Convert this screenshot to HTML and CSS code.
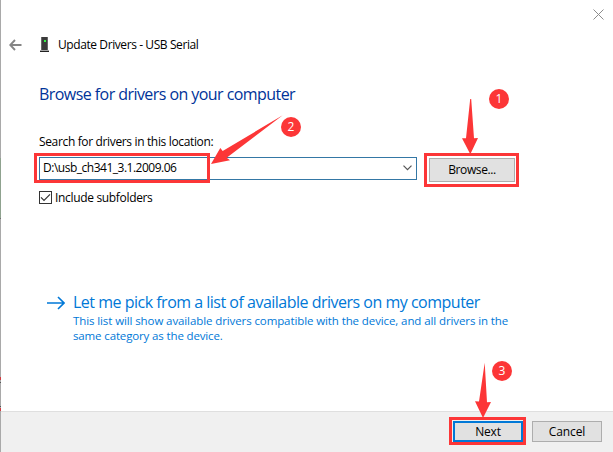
FILE: index.html
```
<!DOCTYPE html>
<html lang="en">
<head>
<meta charset="utf-8">
<title>Update Drivers - USB Serial</title>
<link rel="stylesheet" href="styles.css">
</head>
<body>
<div class="window">
  <div class="edge"></div>
  <header class="titlebar">
    <svg class="close" width="11" height="11" viewBox="0 0 11 11"><path d="M.5 .5l10 10M10.5 .5l-10 10"/></svg>
  </header>
  <div class="caption">
    <svg class="back" width="13" height="12" viewBox="0 0 13 12"><path d="M12.5 6H1.5M6 1L1.2 6L6 11"/></svg>
    <svg class="device" width="9" height="15" viewBox="0 0 9 15">
      <path d="M1 0h7v13H1z" fill="#3b3b3b"/><path d="M1 0h1v13H1zM7 0h1v13H7z" fill="#686868"/>
      <path d="M0 13.6h9V15H0z" fill="#222"/><path d="M4 3h2v2H4z" fill="#35f545"/>
    </svg>
    <span>Update Drivers - USB Serial</span>
  </div>
  <main class="content">
    <h1>Browse for drivers on your computer</h1>
    <label class="label" for="path">Search for drivers in this location:</label>
    <div class="location">
      <div class="combo" id="path">
        <span>D:\usb_ch341_3.1.2009.06</span>
        <svg width="9" height="6" viewBox="0 0 9 6"><path d="M.5 .7L4.5 4.7L8.5 .7"/></svg>
      </div>
      <button class="button browse">Browse...</button>
    </div>
    <div class="option">
      <span class="check"><svg width="11" height="11" viewBox="0 0 11 11"><path d="M1 5.3L4 8.3L10 2.3"/></svg></span>
      <span>Include subfolders</span>
    </div>
    <div class="link">
      <svg width="18" height="14" viewBox="0 0 18 14"><path d="M0 7h17M11 1l6 6l-6 6"/></svg>
      <div>
        <div class="link-title">Let me pick from a list of available drivers on my computer</div>
        <div class="link-text">This list will show available drivers compatible with the device, and all drivers in the<br><span class="last">same category as the device.</span></div>
      </div>
    </div>
  </main>
  <footer class="footer">
    <button class="button next">Next</button>
    <button class="button cancel">Cancel</button>
  </footer>
  <svg class="notes" width="613" height="452" viewBox="0 0 613 452">
    <g class="frames">
      <rect x="35.5" y="154.5" width="173" height="27"/>
      <rect x="425.5" y="154.5" width="92" height="31"/>
      <rect x="450.5" y="418.5" width="74" height="25"/>
    </g>
    <g class="marks">
      <path d="M470.2 99h1L474 138.2L478 138L470.3 154.3L462 138.3L466 138.2z"/>
      <path d="M282.7 115.2L226.7 157.7L230 160.3L211 164L220.3 148L222.7 151z"/>
      <path d="M484.7 362.7L487 402.2L491 402L483 418L475 401.3L479 401.5z"/>
      <circle cx="499" cy="99" r="10"/>
      <circle cx="291" cy="127" r="10"/>
      <circle cx="502" cy="371" r="10"/>
    </g>
    <g class="digits">
      <text x="499" y="103.2">1</text>
      <text x="291" y="131.2">2</text>
      <text x="502" y="375.2">3</text>
    </g>
  </svg>
</div>
</body>
</html>
```
FILE: styles.css
```
* { box-sizing: border-box; }
body {
  margin: 0;
  font: 12px/15px "Open Sans", "Noto Sans", sans-serif;
  color: #000;
}
svg { display: block; fill: none; flex: none; }
.window {
  position: relative;
  width: 613px;
  height: 452px;
  padding-left: 1px;
  display: flex;
  flex-direction: column;
  background: #fff;
  overflow: hidden;
}
.edge {
  position: absolute;
  inset: 0 auto 0 0;
  width: 1px;
  background: linear-gradient(#a9a9a9 158px, #8fa28f 158px 218px, #707070 218px 219px, #a9a9a9 219px 377px,
    #d03b40 377px 380px, #a9a9a9 380px 382px, #555 382px 383px, #a9a9a9 383px 406px, #555 406px 407px,
    #a9a9a9 407px 408px, #d03b40 408px 411px, #a9a9a9 411px);
}
.titlebar { display: flex; justify-content: flex-end; height: 37px; padding: 9px 9px 0 0; }
.close { stroke: #8c8c8c; stroke-width: 1; }
.caption { display: flex; align-items: center; height: 15px; padding-left: 8px; letter-spacing: -.41px; }
.back { stroke: #858585; stroke-width: 1.9; }
.device { margin: 0 9px 0 18px; }
.content { flex: 1; padding: 31px 0 0 38px; }
h1 { margin: 0; font-size: 16px; line-height: 22px; font-weight: 400; letter-spacing: -.56px; color: #003399; }
.label { display: block; margin-top: 29px; letter-spacing: -.35px; }
.location { display: flex; align-items: center; gap: 12px; margin-top: 7px; height: 25px; }
.combo {
  display: flex;
  align-items: center;
  justify-content: space-between;
  width: 378px;
  height: 23px;
  padding: 0 4px 2px 3px;
  border: 1px solid #3477a5;
  letter-spacing: -.49px;
}
.combo svg { stroke: #555; stroke-width: 1.2; }
.button {
  border: 1px solid #adadad;
  background: #e1e1e1;
  padding: 0;
  font: inherit;
  color: #000;
}
.browse { width: 86px; height: 24px; margin-top: 2px; letter-spacing: -.4px; }
.option { display: flex; align-items: center; gap: 3px; margin-top: 9px; height: 15px; letter-spacing: -.33px; }
.check { width: 13px; height: 13px; border: 1px solid #333; }
.check svg { stroke: #333; stroke-width: 1.2; }
.link { display: flex; gap: 8px; margin: 87px 0 0 8px; color: #0078d7; }
.link > svg { margin-top: 4px; stroke: #0078d7; stroke-width: 1.6; }
.link-title { font-size: 16px; line-height: 21px; letter-spacing: -.5px; }
.link-text { font-size: 11.5px; letter-spacing: -.1px; }
.last { letter-spacing: -.14px; }
.footer {
  display: flex;
  gap: 9px;
  justify-content: flex-end;
  height: 41px;
  padding: 9px 11px 0 0;
  border-top: 1px solid #dfdfdf;
  background: #f0f0f0;
}
.footer .button { width: 70px; height: 21px; }
.footer .next { border: 2px solid #0078d7; letter-spacing: -.2px; }
.footer .cancel { letter-spacing: -.1px; }
.notes { position: absolute; left: 0; top: 0; }
.frames { stroke: #fc3637; stroke-width: 3; }
.marks { fill: #fc3637; }
.digits { fill: #fff; font-size: 12px; text-anchor: middle; }
```
